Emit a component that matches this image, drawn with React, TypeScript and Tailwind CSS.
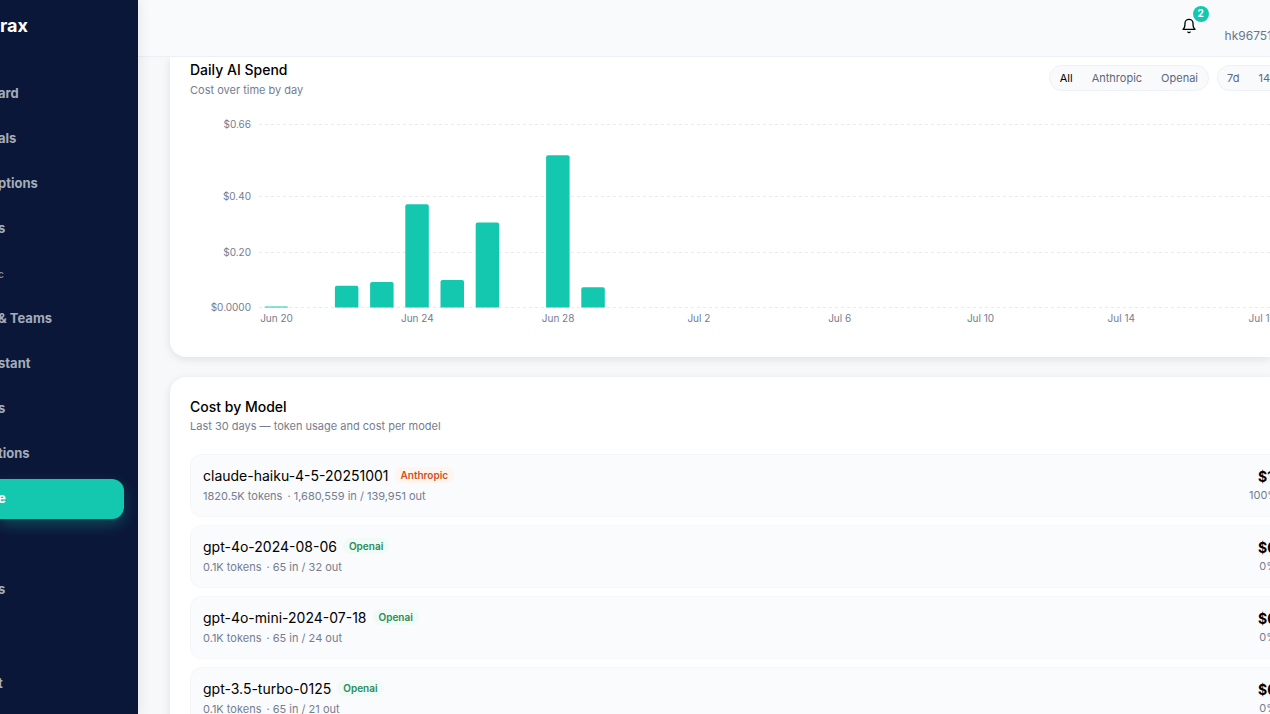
import React from "react";

const NAV = [
  { label: "ard" },
  { label: "als" },
  { label: "ptions" },
  { label: "s" },
  { label: "c", muted: true },
  { label: "& Teams" },
  { label: "stant" },
  { label: "s" },
  { label: "tions" },
  { label: "e", active: true },
];

const BARS = [
  { day: 0, cost: 0.004 },
  { day: 2, cost: 0.079 },
  { day: 3, cost: 0.092 },
  { day: 4, cost: 0.374 },
  { day: 5, cost: 0.1 },
  { day: 6, cost: 0.308 },
  { day: 8, cost: 0.552 },
  { day: 9, cost: 0.073 },
];

const DAYS = ["Jun 20", "Jun 24", "Jun 28", "Jul 2", "Jul 6", "Jul 10", "Jul 14", "Jul 18"];

const GRID = [
  { label: "$0.66", y: 19 },
  { label: "$0.40", y: 91 },
  { label: "$0.20", y: 147 },
  { label: "$0.0000", y: 202 },
];

const MODELS = [
  { name: "claude-haiku-4-5-20251001", provider: "Anthropic", total: "1820.5K tokens", split: "1,680,559 in / 139,951 out", cost: "$1", share: "100%" },
  { name: "gpt-4o-2024-08-06", provider: "Openai", total: "0.1K tokens", split: "65 in / 32 out", cost: "$0", share: "0%" },
  { name: "gpt-4o-mini-2024-07-18", provider: "Openai", total: "0.1K tokens", split: "65 in / 24 out", cost: "$0", share: "0%" },
  { name: "gpt-3.5-turbo-0125", provider: "Openai", total: "0.1K tokens", split: "65 in / 21 out", cost: "$0", share: "0%" },
];

const STEP = 35.2;
const SCALE = 276;

function NavLink({ label, active, muted }: { label: string; active?: boolean; muted?: boolean }) {
  return (
    <a
      href="#"
      className={
        active
          ? "flex h-10 items-center rounded-r-xl bg-[#14c8b0] text-[13px] font-bold text-white shadow-[0_6px_14px_rgba(20,200,176,0.28)]"
          : muted
            ? "flex h-10 items-center text-[10px] font-semibold text-[#7c879c]"
            : "flex h-10 items-center text-[13px] font-bold text-[#a3adbb]"
      }
    >
      <span className="-ml-[2px]">{label}</span>
    </a>
  );
}

function Sidebar() {
  return (
    <aside className="z-20 w-[138px] shrink-0 bg-[#0b1739] shadow-[2px_0_12px_rgba(15,23,42,0.08)]">
      <div className="flex h-[52px] items-center text-lg font-bold text-white">rax</div>
      <nav className="mt-[22px] flex flex-col gap-[5px] pr-[14px]">
        {NAV.map((item, i) => (
          <NavLink key={i} {...item} />
        ))}
      </nav>
      <nav className="mt-[51px] flex flex-col gap-[54px] pr-[14px]">
        <NavLink label="s" />
        <NavLink label="t" />
      </nav>
    </aside>
  );
}

function BellIcon() {
  return (
    <svg
      width="16"
      height="16"
      viewBox="0 0 24 24"
      fill="none"
      stroke="currentColor"
      strokeWidth="2"
      strokeLinecap="round"
      strokeLinejoin="round"
    >
      <path d="M6 8a6 6 0 0 1 12 0c0 7 3 9 3 9H3s3-2 3-9" />
      <path d="M10.3 21a1.94 1.94 0 0 0 3.4 0" />
    </svg>
  );
}

function Header() {
  return (
    <header className="flex h-[57px] shrink-0 items-center justify-end gap-7 border-b border-[#eceff3] bg-[#f8fafc]">
      <button type="button" aria-label="Notifications" className="relative -mt-[5px] text-black">
        <BellIcon />
        <span className="absolute -top-3 left-3 flex size-4 items-center justify-center rounded-full bg-[#14c8b0] text-[10px] font-bold text-white">
          2
        </span>
      </button>
      <span className="-mr-[2px] mt-4 text-xs text-[#6b7488]">hk96751</span>
    </header>
  );
}

function Chart() {
  return (
    <svg className="mt-[7px] h-[220px] w-full" role="img" aria-label="Daily AI Spend">
      {GRID.map((g) => (
        <g key={g.label}>
          <text x="61" y={g.y + 4} textAnchor="end" className="fill-[#757d90] text-[10px]">
            {g.label}
          </text>
          <line x1="69" x2="100%" y1={g.y + 0.5} y2={g.y + 0.5} stroke="#e8eaee" strokeDasharray="3 3" />
        </g>
      ))}
      {BARS.map((b) => {
        const h = b.cost * SCALE;
        const x = 74.5 + b.day * STEP;
        const r = Math.min(2, h);
        return (
          <path
            key={b.day}
            d={`M${x} 202.5v${r - h}q0 ${-r} ${r} ${-r}h${23.5 - 2 * r}q${r} 0 ${r} ${r}v${h - r}z`}
            fill="#14c8b0"
          />
        );
      })}
      {DAYS.map((d, i) => (
        <text key={d} x={86.5 + i * 4 * STEP} y="217" textAnchor="middle" className="fill-[#757d90] text-[10px]">
          {d}
        </text>
      ))}
    </svg>
  );
}

function Filters() {
  return (
    <div className="flex gap-2">
      <div className="flex h-[26px] items-center gap-[19px] rounded-full border border-[#eef1f5] bg-[#f9fafc] px-[10px] text-[11px] text-[#5c6781]">
        <button type="button" className="text-black">All</button>
        <button type="button">Anthropic</button>
        <button type="button">Openai</button>
      </div>
      <div className="flex h-[26px] w-[53px] items-center gap-[19px] rounded-l-full border border-r-0 border-[#eef1f5] bg-[#f9fafc] pl-[9px] text-[11px] text-[#5c6781]">
        <button type="button">7d</button>
        <button type="button">14</button>
      </div>
    </div>
  );
}

export default function App() {
  return (
    <div className="flex h-screen overflow-hidden bg-[#f6f8fa] font-['Inter',sans-serif]">
      <Sidebar />
      <div className="flex min-w-0 flex-1 flex-col">
        <Header />
        <main className="flex min-h-0 flex-1 flex-col gap-5 overflow-hidden pl-8">
          <section className="shrink-0 rounded-bl-2xl bg-white pb-8 pl-5 shadow-[0_2px_8px_rgba(15,23,42,0.10)]">
            <div className="flex justify-between pt-1">
              <div>
                <h2 className="text-sm leading-[18px] font-medium text-black">Daily AI Spend</h2>
                <p className="mt-[3px] text-[11px] leading-4 text-[#757d90]">Cost over time by day</p>
              </div>
              <div className="pt-1">
                <Filters />
              </div>
            </div>
            <Chart />
          </section>
          <section className="shrink-0 rounded-tl-2xl bg-white pt-5 pl-5 shadow-[0_2px_8px_rgba(15,23,42,0.10)]">
            <h2 className="text-sm leading-5 font-medium text-black">Cost by Model</h2>
            <p className="text-[11px] leading-[18px] text-[#757d90]">Last 30 days — token usage and cost per model</p>
            <ul className="mt-[19px] flex flex-col gap-2">
              {MODELS.map((m) => (
                <li
                  key={m.name}
                  className="flex h-[63px] justify-between rounded-l-xl border border-r-0 border-[#f4f6f8] bg-[#fafbfd] pt-[11px] pl-3"
                >
                  <div>
                    <div className="flex items-start gap-[6px]">
                      <span className="text-sm leading-5 text-black">{m.name}</span>
                      <span
                        className={
                          m.provider === "Anthropic"
                            ? "mt-px rounded-full bg-[#fff5ef] px-[6px] text-[10px] leading-4 font-semibold text-[#d04f23]"
                            : "mt-px rounded-full bg-[#effbf4] px-[6px] text-[10px] leading-4 font-semibold text-[#2c8a5c]"
                        }
                      >
                        {m.provider}
                      </span>
                    </div>
                    <p className="mt-[2px] text-[11px] leading-4 text-[#757d90]">
                      <span className="mr-[5px]">{m.total}</span>· {m.split}
                    </p>
                  </div>
                  <div className="-mr-[7px] w-7">
                    <p className="pl-[9px] text-sm leading-[22px] font-bold text-black">{m.cost}</p>
                    <p className="text-right text-[11px] leading-[14px] text-[#757d90]">{m.share}</p>
                  </div>
                </li>
              ))}
            </ul>
          </section>
        </main>
      </div>
    </div>
  );
}
